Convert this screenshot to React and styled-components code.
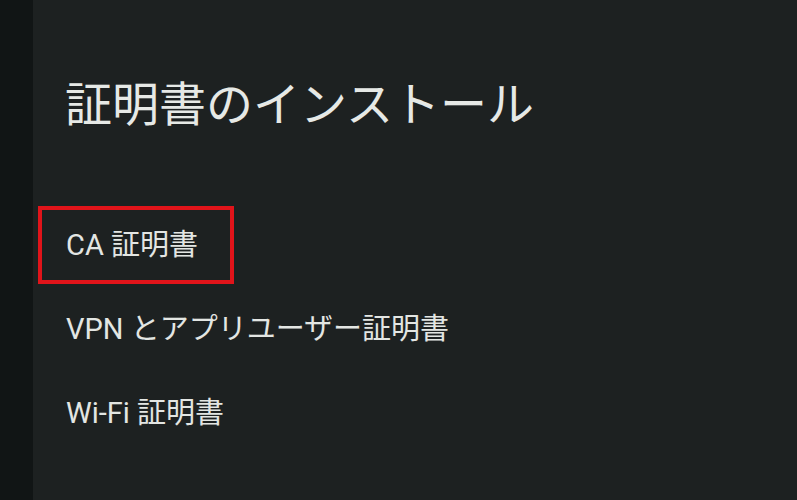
import React from 'react'
import styled, { createGlobalStyle } from 'styled-components'

const GlobalStyle = createGlobalStyle`
  html, body {
    margin: 0;
    padding: 0;
    background: #1d2121;
  }
  body {
    font-family: Roboto, "Noto Sans CJK JP", sans-serif;
  }
`;

const Screen = styled.div`
  display: flex;
  width: 797px;
  height: 500px;
  overflow: hidden;
`;

const SideStrip = styled.div`
  width: 33px;
  flex-shrink: 0;
  background: #111515;
`;

const Panel = styled.div`
  flex: 1;
  display: flex;
  flex-direction: column;
  background: #1d2121;
  padding-top: 81px;
`;

const Title = styled.h1`
  margin: 0 0 72px 32px;
  font-size: 47px;
  line-height: 47px;
  font-weight: 400;
  color: #e6e9e6;
`;

const List = styled.div`
  display: flex;
  flex-direction: column;
`;

const Item = styled.div`
  height: 84px;
  box-sizing: border-box;
  padding: 6px 0 0 5px;
  display: flex;
  align-items: flex-start;
`;

const Label = styled.div`
  height: 78px;
  box-sizing: border-box;
  display: flex;
  align-items: center;
  padding: 0 32px 6px 24px;
  border: 4px solid ${props => props.focused ? '#e0141a' : 'transparent'};
  font-size: 29px;
  color: #e3e6e3;
  white-space: nowrap;
`;

const items = [
  { id: 'ca', title: 'CA 証明書', focused: true },
  { id: 'vpn', title: 'VPN とアプリユーザー証明書' },
  { id: 'wifi', title: 'Wi-Fi 証明書' },
]

export default function App() {
  return (
    <>
      <GlobalStyle />
      <Screen>
        <SideStrip />
        <Panel>
          <Title>証明書のインストール</Title>
          <List>
            {items.map(item => (
              <Item key={item.id}>
                <Label focused={item.focused}>{item.title}</Label>
              </Item>
            ))}
          </List>
        </Panel>
      </Screen>
    </>
  )
}
